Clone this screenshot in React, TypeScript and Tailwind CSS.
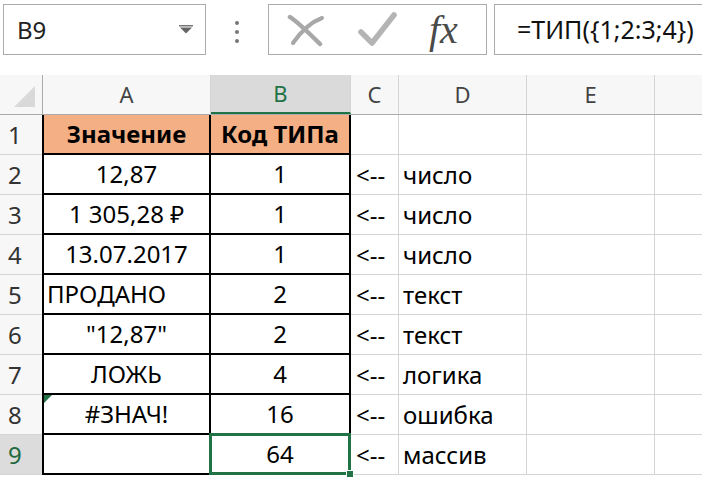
import React from 'react';

type Row = {
  a: string;
  b: string;
  c?: string;
  d?: string;
  head?: boolean;
  left?: boolean;
  err?: boolean;
};

const rows: Row[] = [
  { a: 'Значение', b: 'Код ТИПа', head: true },
  { a: '12,87', b: '1', c: '<--', d: 'число' },
  { a: '1 305,28 ₽', b: '1', c: '<--', d: 'число' },
  { a: '13.07.2017', b: '1', c: '<--', d: 'число' },
  { a: 'ПРОДАНО', b: '2', c: '<--', d: 'текст', left: true },
  { a: '"12,87"', b: '2', c: '<--', d: 'текст' },
  { a: 'ЛОЖЬ', b: '4', c: '<--', d: 'логика' },
  { a: '#ЗНАЧ!', b: '16', c: '<--', d: 'ошибка', err: true },
  { a: '', b: '64', c: '<--', d: 'массив' },
];

function FormulaBar() {
  return (
    <div className="flex h-[75px] items-start bg-white pt-[4px]">
      {/* name box */}
      <div className="ml-[3px] flex h-[51px] w-[203px] items-center justify-between border border-[#ababab] bg-white pl-[13px] pr-[12px]">
        <span className="text-[24px] text-[#222]">B9</span>
        <svg width="14" height="9" viewBox="0 0 14 9">
          <rect x="0" y="0" width="14" height="1.5" fill="#777" />
          <path d="M1 2.5 L13 2.5 L7 8.5 Z" fill="#666" />
        </svg>
      </div>
      {/* dots */}
      <div className="flex w-[62px] flex-col items-center gap-[5px] pt-[17px]">
        <span className="h-[4px] w-[4px] rounded-full bg-[#777]" />
        <span className="h-[4px] w-[4px] rounded-full bg-[#777]" />
        <span className="h-[4px] w-[4px] rounded-full bg-[#777]" />
      </div>
      {/* buttons */}
      <div className="flex h-[51px] w-[219px] items-center border border-[#ababab] bg-white">
        <svg className="ml-[18px]" width="38" height="34" viewBox="0 0 38 34">
          <path d="M3 4 C12 10 22 20 33 31" stroke="#a8a8a8" strokeWidth="4.5" strokeLinecap="round" fill="none" />
          <path d="M35 5 C24 9 13 20 6 30" stroke="#a8a8a8" strokeWidth="4" strokeLinecap="round" fill="none" />
        </svg>
        <svg className="ml-[32px]" width="40" height="36" viewBox="0 0 40 36">
          <path d="M4 20 L15 31 L37 3" stroke="#b4b4b4" strokeWidth="5.5" strokeLinecap="round" strokeLinejoin="round" fill="none" />
        </svg>
        <span className="ml-[32px] font-['Liberation_Serif',serif] text-[40px] italic leading-none text-[#4a4a4a]">
          fx
        </span>
      </div>
      {/* formula input */}
      <div className="ml-[7px] flex h-[51px] flex-1 items-center border border-r-0 border-[#ababab] bg-white pl-[22px]">
        <span className="whitespace-nowrap text-[25px] text-[#111]">=ТИП({'{'}1;2:3;4{'}'})</span>
      </div>
    </div>
  );
}

function ColumnHeaders() {
  const cols = [
    { l: 'C', w: 'w-[48px]' },
    { l: 'D', w: 'w-[128px]' },
    { l: 'E', w: 'w-[128px]' },
  ];
  return (
    <div className="flex h-[40px] border-b border-[#ababab] bg-[#f7f7f7] text-[22px] text-[#444]">
      <div className="relative w-[43px] border-r border-[#ababab]">
        <svg className="absolute bottom-[7px] right-[7px]" width="21" height="21" viewBox="0 0 21 21">
          <path d="M21 0 L21 21 L0 21 Z" fill="#d9d9d9" />
        </svg>
      </div>
      <div className="flex w-[168px] items-center justify-center border-r border-[#d4d4d4]">A</div>
      <div className="flex w-[140px] items-center justify-center border-b-2 border-r border-b-[#217346] border-r-[#d4d4d4] bg-[#dadada] text-[#217346]">
        B
      </div>
      {cols.map((c) => (
        <div key={c.l} className={`flex ${c.w} items-center justify-center border-r border-[#d4d4d4]`}>
          {c.l}
        </div>
      ))}
      <div className="flex-1" />
    </div>
  );
}

function GridRow({ r, n }: { r: Row; n: number }) {
  const last = n === 9;
  return (
    <div className="flex h-[40px]">
      <div
        className={`flex w-[42px] items-center border-b border-[#d4d4d4] pl-[8px] text-[24px] ${
          last ? 'bg-[#dcdcdc] text-[#1e6b3f]' : 'bg-[#f7f7f7] text-[#333]'
        }`}
      >
        {n}
      </div>
      <div
        className={`relative flex w-[169px] items-center border-x-2 border-b-2 border-black text-[24px] text-black ${
          r.left ? 'justify-start pl-[3px]' : 'justify-center'
        } ${r.head ? 'bg-[#f4b084] font-bold text-[#1a1a1a]' : 'bg-white'}`}
      >
        {r.err && (
          <svg className="absolute left-0 top-0" width="8" height="8" viewBox="0 0 8 8">
            <path d="M0 0 L8 0 L0 8 Z" fill="#217346" />
          </svg>
        )}
        {r.a}
      </div>
      <div
        className={`relative flex w-[140px] items-center justify-center border-b-2 border-r-2 border-black text-[24px] text-black ${
          r.head ? 'bg-[#f4b084] font-bold text-[#1a1a1a]' : 'bg-white'
        }`}
      >
        {r.b}
        {last && (
          <>
            <div className="pointer-events-none absolute -bottom-[2px] -left-[2px] -right-[2px] -top-[2px] border-[3px] border-[#217346]" />
            <div className="absolute -bottom-[5px] -right-[5px] h-[8px] w-[8px] border border-white bg-[#217346]" />
          </>
        )}
      </div>
      <div className="flex w-[48px] items-center border-b border-r border-[#d4d4d4] pl-[5px] text-[24px] text-black">
        {r.c}
      </div>
      <div className="flex w-[128px] items-center border-b border-r border-[#d4d4d4] pl-[4px] text-[24px] text-black">
        {r.d}
      </div>
      <div className="w-[128px] border-b border-r border-[#d4d4d4]" />
      <div className="flex-1 border-b border-[#d4d4d4]" />
    </div>
  );
}

export default function App() {
  return (
    <div className="h-[478px] w-[702px] overflow-hidden bg-white font-['Noto_Sans',sans-serif]">
      <FormulaBar />
      <ColumnHeaders />
      {rows.map((r, i) => (
        <GridRow key={i} r={r} n={i + 1} />
      ))}
    </div>
  );
}
